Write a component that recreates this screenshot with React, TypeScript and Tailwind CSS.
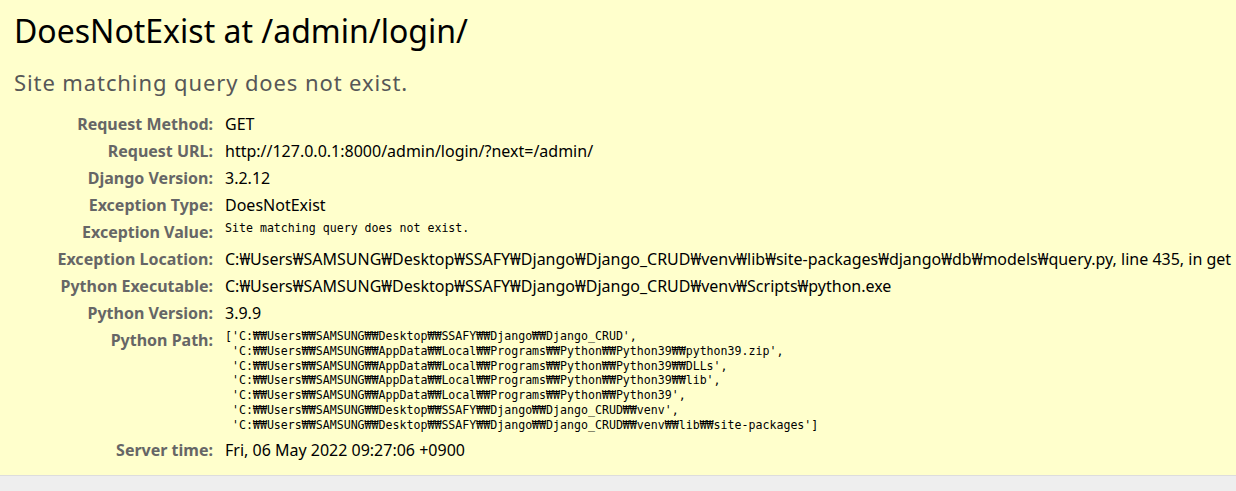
const W = '\u20A9'

const rows: { label: string; value: string; mono?: boolean }[] = [
  { label: 'Request Method:', value: 'GET' },
  { label: 'Request URL:', value: 'http://127.0.0.1:8000/admin/login/?next=/admin/' },
  { label: 'Django Version:', value: '3.2.12' },
  { label: 'Exception Type:', value: 'DoesNotExist' },
  { label: 'Exception Value:', value: 'Site matching query does not exist.', mono: true },
  {
    label: 'Exception Location:',
    value: `C:${W}Users${W}SAMSUNG${W}Desktop${W}SSAFY${W}Django${W}Django_CRUD${W}venv${W}lib${W}site-packages${W}django${W}db${W}models${W}query.py, line 435, in get`,
  },
  {
    label: 'Python Executable:',
    value: `C:${W}Users${W}SAMSUNG${W}Desktop${W}SSAFY${W}Django${W}Django_CRUD${W}venv${W}Scripts${W}python.exe`,
  },
  { label: 'Python Version:', value: '3.9.9' },
]

const D = W + W
const pythonPath = [
  `['C:${D}Users${D}SAMSUNG${D}Desktop${D}SSAFY${D}Django${D}Django_CRUD',`,
  ` 'C:${D}Users${D}SAMSUNG${D}AppData${D}Local${D}Programs${D}Python${D}Python39${D}python39.zip',`,
  ` 'C:${D}Users${D}SAMSUNG${D}AppData${D}Local${D}Programs${D}Python${D}Python39${D}DLLs',`,
  ` 'C:${D}Users${D}SAMSUNG${D}AppData${D}Local${D}Programs${D}Python${D}Python39${D}lib',`,
  ` 'C:${D}Users${D}SAMSUNG${D}AppData${D}Local${D}Programs${D}Python${D}Python39',`,
  ` 'C:${D}Users${D}SAMSUNG${D}Desktop${D}SSAFY${D}Django${D}Django_CRUD${D}venv',`,
  ` 'C:${D}Users${D}SAMSUNG${D}Desktop${D}SSAFY${D}Django${D}Django_CRUD${D}venv${D}lib${D}site-packages']`,
]

function Label({ children }: { children: string }) {
  return (
    <div className="h-[27px] text-right text-[16px] leading-[27px] font-bold text-[#666]">{children}</div>
  )
}

export default function App() {
  return (
    <div className="min-h-screen w-[1236px] overflow-hidden bg-[#eee] font-['Noto_Sans',sans-serif]">
      {/* Summary */}
      <div className="bg-[#ffc] border-b border-[#ddd] pl-[14px] pt-[11px] pb-[11px]">
        <h1 className="text-[32px] leading-[40px] font-normal text-black">DoesNotExist at /admin/login/</h1>
        <p className="mt-[17px] text-[22px] leading-[28px] tracking-[0.9px] text-[#575757]">
          Site matching query does not exist.
        </p>

        <div className="mt-[15px] grid grid-cols-[199px_1fr] gap-x-[12px] whitespace-nowrap">
          {rows.map(r => (
            <div key={r.label} className="contents">
              <Label>{r.label}</Label>
              {r.mono ? (
                <div className="h-[27px] pt-[2px] font-['DejaVu_Sans_Mono',monospace] text-[11.6px] leading-[15px] text-black whitespace-pre">
                  {r.value}
                </div>
              ) : (
                <div className="h-[27px] text-[16px] leading-[27px] text-black">{r.value}</div>
              )}
            </div>
          ))}

          <Label>Python Path:</Label>
          <div className="h-[110px] pt-[2px] font-['DejaVu_Sans_Mono',monospace] text-[11.6px] leading-[14.8px] text-black whitespace-pre">
            {pythonPath.map(line => (
              <div key={line}>{line}</div>
            ))}
          </div>

          <Label>Server time:</Label>
          <div className="h-[27px] text-[16px] leading-[27px] text-black">Fri, 06 May 2022 09:27:06 +0900</div>
        </div>
      </div>
    </div>
  )
}
